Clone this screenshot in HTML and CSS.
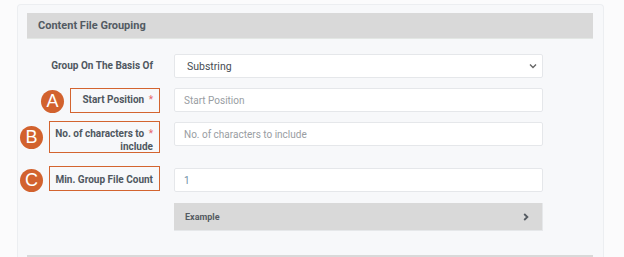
FILE: index.html
```html
<!DOCTYPE html>
<html>
<head>
<meta charset="utf-8">
<link rel="stylesheet" href="styles.css">
</head>
<body>
<div class="panel">
  <div class="section-head">Content File Grouping</div>
  <div class="form">
    <div class="row">
      <div class="label">Group On The Basis Of</div>
      <div class="field select">
        <span class="value">Substring</span>
        <svg class="caret" width="8" height="6" viewBox="0 0 8 6"><path d="M1 1.5 L4 4.5 L7 1.5" fill="none" stroke="#666" stroke-width="1.4"/></svg>
      </div>
    </div>
    <div class="row">
      <div class="label">Start Position <span class="req">*</span>
        <span class="mark mark-a"></span>
        <span class="badge badge-a">A</span>
      </div>
      <div class="field"><span class="placeholder">Start Position</span></div>
    </div>
    <div class="row">
      <div class="label tall">No. of characters to <span class="req">*</span><br>include
        <span class="mark mark-b"></span>
        <span class="badge badge-b">B</span>
      </div>
      <div class="field"><span class="placeholder">No. of characters to include</span></div>
    </div>
    <div class="row">
      <div class="label">Min. Group File Count
        <span class="mark mark-c"></span>
        <span class="badge badge-c">C</span>
      </div>
      <div class="field"><span class="num">1</span></div>
    </div>
    <div class="row example-row">
      <div></div>
      <div class="example">
        <span>Example</span>
        <svg width="6" height="8" viewBox="0 0 6 8"><path d="M1.2 1 L4.4 4 L1.2 7" fill="none" stroke="#555b62" stroke-width="1.8"/></svg>
      </div>
    </div>
  </div>
  <div class="section-head next"></div>
</div>
</body>
</html>
```

FILE: styles.css
```css
html, body {
  margin: 0;
  padding: 0;
  background: #fbfbfc;
  font-family: Roboto, "Liberation Sans", sans-serif;
  height: 257px;
  overflow: hidden;
}
.panel {
  margin: 4px 0 0 17px;
  width: 566px;
  height: 244px;
  overflow: hidden;
  background: #f7f8fa;
  border: 1px solid #eceef1;
  border-bottom: none;
  border-radius: 4px 4px 0 0;
  padding: 8px 10px 0 9px;
}
.section-head {
  height: 25px;
  background: #d9d9d9;
  border-bottom: 1px solid #e3e7e4;
  color: #535b63;
  font-weight: 700;
  font-size: 11px;
  line-height: 26px;
  padding-left: 11px;
}
.form {
  margin-top: 15px;
  height: 201px;
}
.row {
  display: grid;
  grid-template-columns: 133px 369px;
  column-gap: 14px;
  margin-bottom: 10px;
}
.label {
  position: relative;
  text-align: right;
  padding: 5px 7px 4px 0;
  font-size: 10px;
  line-height: 13px;
  font-weight: 700;
  color: #4f5760;
}
.label.tall {
  padding-bottom: 5px;
}
.req {
  color: #e5646a;
  font-weight: 400;
  margin-left: 2px;
}
.field {
  box-sizing: border-box;
  height: 24px;
  background: #fff;
  border: 1px solid #e5e7ea;
  border-radius: 2px;
  display: flex;
  align-items: center;
  padding-left: 9px;
  font-size: 10px;
}
.select {
  padding-left: 12px;
  padding-right: 5px;
  justify-content: space-between;
}
.value { color: #474d54; font-size: 10.5px; }
.placeholder { color: #999da2; }
.num { color: #6f8ea6; }
.mark {
  position: absolute;
  right: 0;
  border: 1px solid #d3642f;
  box-sizing: border-box;
}
.mark-a { top: 0; width: 90px; height: 25px; }
.mark-b { top: -1px; width: 111px; height: 32px; }
.mark-c { top: -2px; width: 111px; height: 25px; }
.badge {
  position: absolute;
  width: 23px;
  height: 23px;
  border-radius: 50%;
  background: #d2622e;
  color: #fff;
  font-family: "Liberation Sans", Arial, sans-serif;
  font-weight: 400;
  font-size: 18px;
  line-height: 23px;
  text-align: center;
}
.badge-a { left: 14px; top: 2px; }
.badge-b { left: -7px; top: 4px; }
.badge-c { left: -7px; top: 1px; }
.example-row {
  margin-top: 11px;
}
.example {
  box-sizing: border-box;
  height: 28px;
  background: #d9d9d9;
  border-right: 1px solid #e6e8ea;
  border-bottom: 1px solid #e6e8ea;
  display: flex;
  align-items: center;
  justify-content: space-between;
  padding: 0 13px 0 11px;
  font-size: 9px;
  font-weight: 700;
  color: #555b62;
}
```
